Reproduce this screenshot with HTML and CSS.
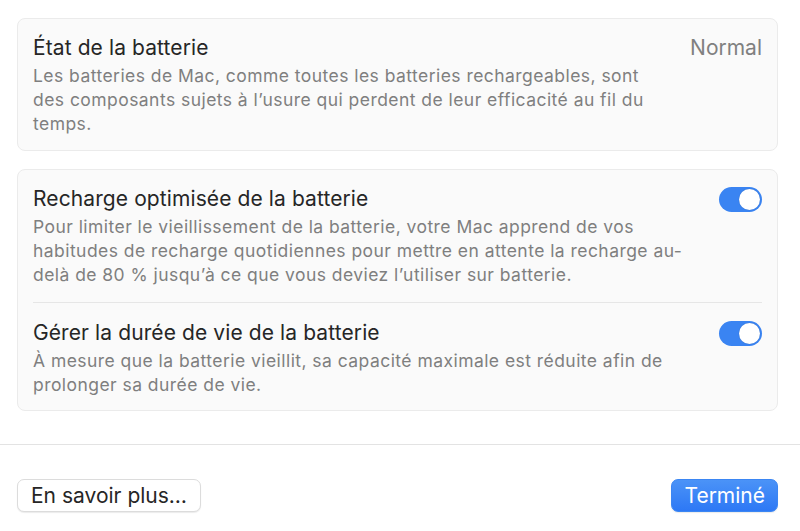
FILE: index.html
```html
<!DOCTYPE html>
<html lang="fr">
<head>
<meta charset="utf-8">
<title>Batterie</title>
<link rel="stylesheet" href="styles.css">
</head>
<body>
<main class="content">
  <section class="card">
    <div class="row">
      <div class="text text-status">
        <div class="title">État de la batterie</div>
        <div class="desc">Les batteries de Mac, comme toutes les batteries rechargeables, sont des composants sujets à l’usure qui perdent de leur efficacité au fil du temps.</div>
      </div>
      <div class="value">Normal</div>
    </div>
  </section>
  <section class="card">
    <div class="row">
      <div class="text">
        <div class="title">Recharge optimisée de la batterie</div>
        <div class="desc">Pour limiter le vieillissement de la batterie, votre Mac apprend de vos habitudes de recharge quotidiennes pour mettre en attente la recharge au-delà de 80 % jusqu’à ce que vous deviez l’utiliser sur batterie.</div>
      </div>
      <div class="toggle on"><span class="knob"></span></div>
    </div>
    <div class="row sep">
      <div class="text">
        <div class="title">Gérer la durée de vie de la batterie</div>
        <div class="desc">À mesure que la batterie vieillit, sa capacité maximale est réduite afin de prolonger sa durée de vie.</div>
      </div>
      <div class="toggle on"><span class="knob"></span></div>
    </div>
  </section>
</main>
<footer class="footer">
  <button class="btn">En savoir plus…</button>
  <button class="btn primary">Terminé</button>
</footer>
</body>
</html>
```
FILE: styles.css
```css
* { box-sizing: border-box; }
html, body { margin: 0; padding: 0; background: #ffffff; }
body {
  font-family: Inter, "Noto Sans", "Liberation Sans", sans-serif;
  color: #262626;
  width: 800px;
  height: 531px;
  overflow: hidden;
}
.content {
  padding: 18px 22px 0 17px;
  display: flex;
  flex-direction: column;
  gap: 18px;
  height: 445px;
  border-bottom: 1px solid #e3e3e3;
}
.card {
  background: #fafafa;
  border: 1px solid #ebebeb;
  border-radius: 8px;
  padding: 0 15px;
}
.row {
  display: flex;
  align-items: flex-start;
  justify-content: space-between;
  padding: 17px 0 13px;
}
.card .row + .row { padding-top: 18px; }
.sep { border-top: 1px solid #e6e6e6; }
.card .row:first-child:not(:last-child) { padding-bottom: 15px; }
.card .row:only-child { padding-bottom: 14px; }
.text { flex: 0 1 auto; max-width: 668px; }
.text-status { max-width: 625px; }
.title {
  font-size: 21px;
  line-height: 24px;
  color: #262626;
  margin-bottom: 4px;
  letter-spacing: 0.1px;
}
.desc {
  font-size: 17.5px;
  line-height: 24px;
  color: #7f7f7f;
  letter-spacing: 0.45px;
}
.value {
  font-size: 21px;
  line-height: 24px;
  color: #808080;
}
.toggle {
  width: 43px;
  height: 25px;
  border-radius: 13px;
  background: #3a84f2;
  padding: 2px;
  display: flex;
  justify-content: flex-end;
  flex: none;
}
.knob {
  width: 21px;
  height: 21px;
  border-radius: 50%;
  background: #ffffff;
  box-shadow: 0 0 1px rgba(0,0,0,0.25);
}
.footer {
  display: flex;
  justify-content: space-between;
  align-items: flex-start;
  padding: 34px 22px 0 17px;
}
.btn {
  font-family: inherit;
  font-size: 21px;
  line-height: 24px;
  height: 33px;
  padding: 0 13px;
  border-radius: 7px;
  border: 1px solid #dcdcdc;
  background: #ffffff;
  color: #262626;
  box-shadow: 0 1px 1px rgba(0,0,0,0.08);
}
.btn.primary {
  border: 1px solid #3b86f3;
  background: linear-gradient(#4b93f7, #2d78f5);
  color: #ffffff;
  padding: 0 12px;
}
```
